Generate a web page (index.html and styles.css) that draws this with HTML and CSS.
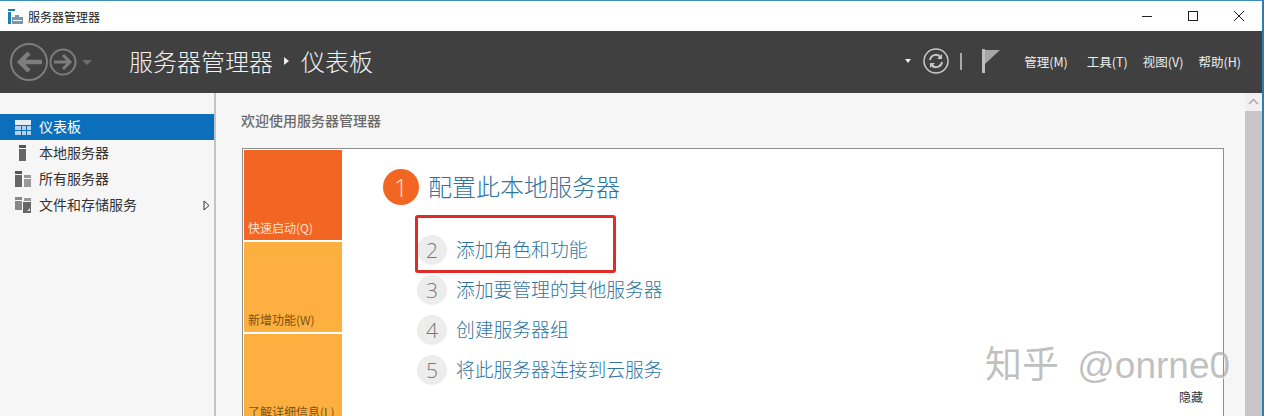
FILE: index.html
```html
<!DOCTYPE html>
<html lang="zh-CN">
<head>
  <meta charset="UTF-8" />
  <title>服务器管理器</title>
  <link rel="stylesheet" href="styles.css">
</head>
<body>
  <div class="window">
    <div class="titlebar">
      <svg class="app-icon" width="15" height="15" viewBox="0 0 15 15">
        <rect x="0" y="0" width="7" height="2" fill="#1f7fb5"/>
        <rect x="0" y="3" width="3" height="12" fill="#1f7fb5"/>
        <path d="M4 8h3V6h4v2h4v7H4z" fill="#7b98a8"/>
        <rect x="5" y="11" width="9" height="1" fill="#fff"/>
      </svg>
      <span class="app-name">服务器管理器</span>
      <div class="winbtns">
        <svg width="12" height="12" viewBox="0 0 12 12"><path d="M1 6.5h10" stroke="#222" stroke-width="1"/></svg>
        <svg width="12" height="12" viewBox="0 0 12 12"><rect x="1.5" y="1.5" width="9" height="9" fill="none" stroke="#222"/></svg>
        <svg width="12" height="12" viewBox="0 0 12 12"><path d="M1 1l10 10M11 1L1 11" stroke="#222" fill="none"/></svg>
      </div>
    </div>

    <div class="header">
      <svg class="nav" width="84" height="40" viewBox="0 0 84 40">
        <g fill="none" stroke="#7d7d7d">
          <circle cx="19" cy="20" r="18" stroke-width="2"/>
          <path d="M32 20H11M19 11l-9 9 9 9" stroke-width="4.5"/>
          <circle cx="53" cy="20" r="12.5" stroke-width="2"/>
          <path d="M44 20h16M53 13l7 7-7 7" stroke-width="3"/>
        </g>
        <path d="M72 18h10l-5 5z" fill="#6e6e6e"/>
      </svg>
      <div class="crumb">
        <span>服务器管理器</span>
        <i class="crumb-arrow"></i>
        <span>仪表板</span>
      </div>
      <div class="tools">
        <i class="drop"></i>
        <svg class="refresh" width="26" height="26" viewBox="0 0 26 26">
          <circle cx="13" cy="13" r="12" fill="none" stroke="#c8c8c8" stroke-width="1.5"/>
          <path d="M7 12a6 6 0 0 1 10.5-3M19 14a6 6 0 0 1-10.5 3" fill="none" stroke="#c8c8c8" stroke-width="2"/>
          <path d="M19 6v5h-5zM7 20v-5h5z" fill="#c8c8c8"/>
        </svg>
        <i class="sep"></i>
        <svg class="flag" width="18" height="24" viewBox="0 0 18 24">
          <rect x="0" y="0" width="3" height="24" fill="#bdbdbd"/>
          <path d="M3 1h15L3 15z" fill="#a6a6a6"/>
        </svg>
        <nav class="menu">
          <span class="m1">管理(M)</span>
          <span class="m2">工具(T)</span>
          <span class="m3">视图(V)</span>
          <span class="m4">帮助(H)</span>
        </nav>
      </div>
    </div>

    <div class="body">
      <aside class="sidebar">
        <div class="side-item active">
          <svg width="16" height="15" viewBox="0 0 16 15">
            <rect width="16" height="5" fill="#e3eef7"/>
            <rect y="6" width="6" height="4" fill="#b5d2ea"/><rect x="7" y="6" width="4" height="4" fill="#b5d2ea"/><rect x="12" y="6" width="4" height="4" fill="#b5d2ea"/>
            <rect y="11" width="6" height="4" fill="#b5d2ea"/><rect x="7" y="11" width="4" height="4" fill="#b5d2ea"/><rect x="12" y="11" width="4" height="4" fill="#b5d2ea"/>
          </svg>
          <span>仪表板</span>
        </div>
        <div class="side-item">
          <svg width="16" height="16" viewBox="0 0 16 16">
            <rect x="4" y="0" width="7" height="3" fill="#555"/><rect x="4" y="4" width="7" height="12" fill="#666"/>
          </svg>
          <span>本地服务器</span>
        </div>
        <div class="side-item">
          <svg width="16" height="16" viewBox="0 0 16 16">
            <rect x="0" y="0" width="7" height="3" fill="#555"/><rect x="0" y="4" width="7" height="12" fill="#666"/>
            <rect x="9" y="4" width="7" height="3" fill="#999"/><rect x="9" y="8" width="7" height="8" fill="#999"/>
          </svg>
          <span>所有服务器</span>
        </div>
        <div class="side-item">
          <svg width="16" height="16" viewBox="0 0 16 16">
            <rect x="0" y="0" width="7" height="3" fill="#888"/><rect x="0" y="4" width="7" height="9" fill="#888"/>
            <rect x="9" y="1" width="7" height="3" fill="#999"/>
            <rect x="8" y="5" width="8" height="11" fill="#666"/>
            <path d="M12 14l3-3v3z" fill="#ddd"/>
          </svg>
          <span>文件和存储服务</span>
          <svg class="expand" width="7" height="11" viewBox="0 0 7 11"><path d="M1 1l5 4.5L1 10z" fill="none" stroke="#333"/></svg>
        </div>
      </aside>

      <main class="main">
        <h2 class="welcome">欢迎使用服务器管理器</h2>
        <div class="panel">
          <div class="tiles">
            <div class="tile tile-start">快速启动(Q)</div>
            <div class="tile tile-new">新增功能(W)</div>
            <div class="tile tile-more">了解详细信息(L)</div>
          </div>
          <div class="steps">
            <div class="step-head">
              <span class="num num-main">1</span>
              <span class="step-text">配置此本地服务器</span>
            </div>
            <div class="step-list">
              <div class="step"><span class="num">2</span><span class="step-text">添加角色和功能</span><div class="mark"></div></div>
              <div class="step"><span class="num">3</span><span class="step-text">添加要管理的其他服务器</span></div>
              <div class="step"><span class="num">4</span><span class="step-text">创建服务器组</span></div>
              <div class="step"><span class="num">5</span><span class="step-text">将此服务器连接到云服务</span></div>
            </div>
          </div>
          <div class="hide">隐藏</div>
        </div>
        <div class="watermark">知乎 @onrne0</div>
      </main>

      <div class="scrollbar">
        <svg class="scroll-up" width="17" height="18" viewBox="0 0 17 18"><path d="M4 11l4.5-4.5L13 11" fill="none" stroke="#a8a8a8" stroke-width="1.5"/></svg>
        <div class="scroll-thumb"></div>
      </div>
    </div>
  </div>
</body>
</html>
```

FILE: styles.css
```css
* {
  box-sizing: border-box;
}
html, body {
  margin: 0;
  height: 100%;
  overflow: hidden;
}
body {
  font-family: "Noto Sans CJK SC", "Liberation Sans", sans-serif;
  background: #fff;
}
.window {
  height: 416px;
  display: flex;
  flex-direction: column;
  border-top: 1px solid #3c8fb8;
  border-right: 2px solid #2a7fb0;
}

/* title bar */
.titlebar {
  height: 30px;
  display: flex;
  align-items: center;
  padding-left: 8px;
  background: #fff;
}
.app-name {
  margin-left: 5px;
  font-size: 12px;
  color: #222;
}
.winbtns {
  margin-left: auto;
  display: flex;
  gap: 34px;
  padding-right: 17px;
}

/* dark header */
.header {
  height: 62px;
  display: flex;
  align-items: center;
  background: #404040;
  padding-left: 10px;
}
.crumb {
  margin: 0 0 3px 35px;
  display: flex;
  align-items: center;
  font-size: 24px;
  color: #f2f2f2;
  font-weight: 300;
}
.crumb-arrow {
  width: 0;
  height: 0;
  margin: 0 12px 0 11px;
  border-left: 5px solid #eee;
  border-top: 4px solid transparent;
  border-bottom: 4px solid transparent;
}
.tools {
  margin-left: auto;
  display: flex;
  align-items: center;
  padding: 0 21px 2px 0;
}
.drop {
  width: 0;
  height: 0;
  border-top: 4px solid #eee;
  border-left: 3.5px solid transparent;
  border-right: 3.5px solid transparent;
  margin-right: 12px;
}
.sep {
  width: 2px;
  height: 17px;
  background: #aaa;
  margin: 0 20px 0 11px;
}
.flag {
  margin-right: 24px;
}
.menu {
  display: flex;
  font-size: 12.5px;
  color: #eee;
  gap: 15px;
}
.menu .m2 {
  margin-left: 4px;
}

/* body */
.body {
  flex: 1;
  display: flex;
  min-height: 0;
  overflow: hidden;
}
.sidebar {
  width: 216px;
  flex: none;
  background: #f6f6f6;
  border-right: 2px solid #c4c4c4;
  padding-top: 21px;
}
.side-item {
  height: 26px;
  display: flex;
  align-items: center;
  gap: 8px;
  padding-left: 15px;
  font-size: 14px;
  color: #333;
}
.side-item span {
  padding-bottom: 3px;
}
.side-item.active {
  background: #0b6fbb;
  color: #fff;
}
.expand {
  margin-left: auto;
  margin-right: 4px;
}

.main {
  position: relative;
  flex: 1;
  background: #f6f6f6;
  padding: 17px 21px 0 26px;
  min-width: 0;
}
.welcome {
  margin: 0 0 0 -1px;
  font-size: 14px;
  line-height: 20px;
  font-weight: 500;
  color: #6a6a6a;
}
.panel {
  position: relative;
  margin-top: 18px;
  height: 300px;
  border: 1px solid #8f8f8f;
  background: #fff;
  display: flex;
  padding: 1px 0 0 1px;
}
.tiles {
  width: 98px;
  flex: none;
  display: flex;
  flex-direction: column;
  gap: 2px;
}
.tile {
  display: flex;
  align-items: flex-end;
  padding: 0 0 4px 4px;
  font-size: 12px;
  line-height: 16px;
}
.tile-start {
  height: 90px;
  background: #f26522;
  color: #fbe3d4;
}
.tile-new {
  height: 90px;
  background: #fdb03f;
  color: #7a5012;
}
.tile-more {
  height: 90px;
  background: #fdb03f;
  color: #7a5012;
}

.steps {
  padding: 19px 0 0 41px;
  color: #2f74a0;
}
.step-head {
  display: flex;
  align-items: center;
  gap: 9px;
  font-size: 24px;
  font-weight: 300;
  height: 36px;
}
.step-text {
  padding-bottom: 3px;
}
.num {
  width: 30px;
  height: 30px;
  border-radius: 50%;
  display: flex;
  align-items: center;
  justify-content: center;
  background: #ededed;
  color: #777;
  font-size: 21px;
  font-weight: 300;
  font-family: "Open Sans", "Liberation Sans", sans-serif;
}
.num-main {
  width: 36px;
  height: 36px;
  background: #f26522;
  color: #fde6d8;
  font-size: 25px;
}
.step-list {
  margin: 30px 0 0 34px;
  display: flex;
  flex-direction: column;
  gap: 10px;
}
.step {
  position: relative;
  display: flex;
  align-items: center;
  gap: 9px;
  height: 30px;
  font-size: 18.8px;
  font-weight: 300;
}
.mark {
  position: absolute;
  left: -2px;
  top: -20px;
  width: 201px;
  height: 58px;
  border: 3px solid #e02b27;
  border-radius: 3px;
}
.hide {
  position: absolute;
  right: 20px;
  top: 239px;
  font-size: 12px;
  color: #333;
}
.watermark {
  position: absolute;
  left: 769px;
  top: 251px;
  font-size: 37px;
  line-height: 44px;
  word-spacing: 8px;
  white-space: nowrap;
  font-family: "Liberation Sans", "Noto Sans CJK SC", sans-serif;
  color: rgba(150, 150, 150, 0.6);
  text-shadow: 1px 1px 1px rgba(255, 255, 255, 0.7);
}

.scrollbar {
  width: 17px;
  flex: none;
  display: flex;
  flex-direction: column;
  background: #f0f0f0;
}
.scroll-up {
  flex: none;
}
.scroll-thumb {
  flex: 1;
  background: #c6c6c6;
}
```
